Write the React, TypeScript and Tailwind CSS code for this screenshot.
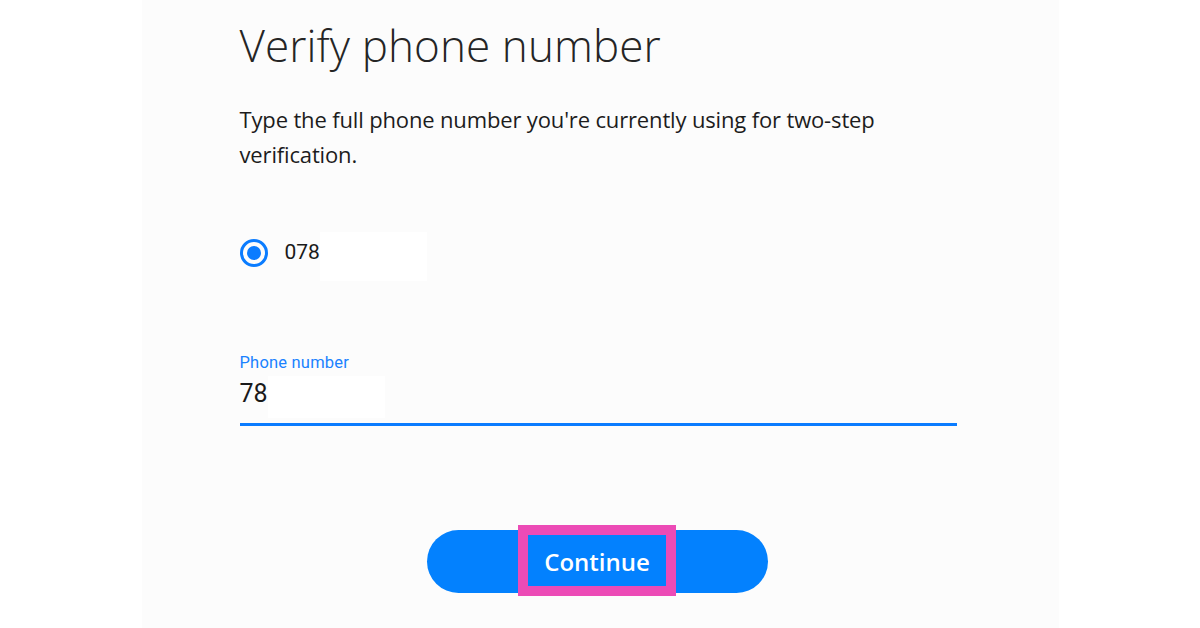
export default function App() {
  return (
    <div className="min-h-[628px] h-[628px] w-full bg-white flex justify-center overflow-hidden">
      <div className="w-[917px] h-full bg-[#fcfcfc] pl-[98px]">
        <div className="w-[717px] flex flex-col">
          <h1 className="mt-[15px] text-[44px] leading-[60px] font-light text-[#252525] tracking-[0.1px] font-['Open_Sans',sans-serif]">
            Verify phone number
          </h1>
          <p className="mt-[27px] text-[22px] leading-[35px] text-[#1c1c1c] tracking-[-0.15px] font-['Open_Sans',sans-serif] w-[680px]">
            Type the full phone number you're currently using for two-step verification.
          </p>

          <div className="mt-[60px] flex items-center h-[49px]">
            <span className="w-[28px] h-[28px] -mt-[7px] rounded-full border-[3px] border-[#0a7cff] flex items-center justify-center">
              <span className="w-[14px] h-[14px] rounded-full bg-[#0a7cff]" />
            </span>
            <span className="ml-[17px] -mt-[7px] text-[21px] text-[#1a1a1a] font-['Roboto',sans-serif]">078</span>
            <span className="w-[107px] h-[49px] bg-white" />
          </div>

          <div className="mt-[72px] flex flex-col">
            <label className="text-[16.5px] leading-[20px] tracking-[0.2px] text-[#1a82ff] font-['Roboto',sans-serif]">Phone number</label>
            <div className="flex items-start h-[53px] border-b-[3px] border-[#0a7cff]">
              <span className="mt-[7px] text-[25px] leading-[28px] text-[#1a1a1a] font-['Roboto',sans-serif]">78</span>
              <span className="w-[117px] h-[42px] mt-[3px] bg-white" />
            </div>
          </div>

          <div className="mt-[104px] flex justify-center pr-[2px]">
            <div className="relative">
              <button className="w-[341px] h-[63px] rounded-full bg-[#0381fe] text-white text-[24px] font-semibold font-['Open_Sans',sans-serif]">
                Continue
              </button>
              <span className="absolute left-[91px] top-[-5px] w-[158px] h-[71px] border-[10px] border-[#ec4bb6]" />
            </div>
          </div>
        </div>
      </div>
    </div>
  );
}
